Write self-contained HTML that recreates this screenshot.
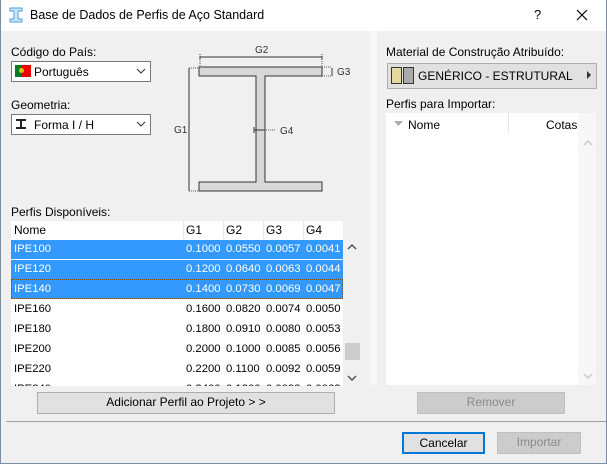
<!DOCTYPE html>
<html><head><meta charset="utf-8"><style>
*{box-sizing:border-box;margin:0;padding:0}
body{width:607px;height:464px;overflow:hidden;font-family:"Liberation Sans",sans-serif;font-size:12px;color:#000;background:#f0f0f0;position:relative}
.a{position:absolute}
.win{left:0;top:0;width:607px;height:464px;border:1px solid #7a8ea6;border-top:none}
.title{left:1px;top:0;width:605px;height:31px;background:#fff}
.dd{background:#fff;border:1px solid #7a7a7a;height:21px}
.btn{background:#e1e1e1;border:1px solid #adadad;text-align:center;line-height:19px}
.dis{color:#8a8a8a;background:#cccccc;border-color:#bfbfbf}
.row{left:11px;width:332px;height:19px;line-height:19px;background:#fff;font-size:11.3px}
.row span{position:absolute;top:0}
.sel{background:#3399ff;color:#fff}
</style></head><body>
<div class="a win"></div>
<div class="a title"></div>
<svg class="a" style="left:9px;top:7px" width="14" height="16" viewBox="0 0 14 16"><path d="M1 1h12v3h-4v8h4v3H1v-3h4V4H1z" fill="#cfe6f7" stroke="#4aa0dc" stroke-width="1"/></svg>
<div class="a" style="left:30px;top:8px;font-size:12.5px">Base de Dados de Perfis de Aço Standard</div>
<div class="a" style="left:534px;top:7px;font-size:13px">?</div>
<svg class="a" style="left:576px;top:9px" width="12" height="12"><path d="M1 1L11 11M11 1L1 11" stroke="#000" stroke-width="1.2"/></svg>

<div class="a" style="left:11px;top:45px">Código do País:</div>
<div class="a dd" style="left:11px;top:61px;width:140px"></div>
<div class="a" style="left:15px;top:65px;width:16px;height:12px;background:#e00"><div style="width:6px;height:12px;background:#0a7a2a"></div><div class="a" style="left:4px;top:3px;width:5px;height:5px;border-radius:50%;background:#e8c000"></div></div>
<div class="a" style="left:34px;top:65px">Português</div>
<svg class="a" style="left:136px;top:68px" width="10" height="6"><path d="M1 1l4 4 4-4" fill="none" stroke="#333"/></svg>

<div class="a" style="left:11px;top:98px">Geometria:</div>
<div class="a dd" style="left:11px;top:114px;width:140px"></div>
<svg class="a" style="left:16px;top:119px" width="10" height="10"><path d="M0 0h10v2H6v6h4v2H0V8h4V2H0z" fill="#222"/></svg>
<div class="a" style="left:34px;top:118px">Forma I / H</div>
<svg class="a" style="left:136px;top:121px" width="10" height="6"><path d="M1 1l4 4 4-4" fill="none" stroke="#333"/></svg>

<svg class="a" style="left:170px;top:40px" width="190" height="160" font-family="Liberation Sans" font-size="10" fill="#333">
<path d="M29 27h123v9H95v106h57v9H29v-9h57V36H29z" fill="#d8d8d8" stroke="#333"/>
<path d="M30 17h122" stroke="#333"/><path d="M30 14v6M152 14v6" stroke="#333" stroke-dasharray="1,1"/>
<path d="M30 17v10M152 17v10" stroke="#555" stroke-dasharray="1,1"/>
<text x="85" y="13">G2</text>
<path d="M19 28v123" stroke="#333"/><path d="M19 28h10M19 151h10" stroke="#555" stroke-dasharray="1,1"/>
<text x="4" y="93">G1</text>
<path d="M152 27h10M152 36h10" stroke="#555" stroke-dasharray="1,1"/>
<path d="M162 28v8" stroke="#333"/><text x="167" y="35">G3</text>
<path d="M84 90h11" stroke="#333"/><path d="M84 87v6M95 87v6" stroke="#333"/>
<path d="M96 90h10" stroke="#555" stroke-dasharray="1,1"/><text x="110" y="94">G4</text>
</svg>

<div class="a" style="left:11px;top:205px">Perfis Disponíveis:</div>
<div class="a" style="left:11px;top:221px;width:332px;height:165px;background:#fff;overflow:hidden">
</div>
<div class="a row" style="top:221px;height:18px;line-height:18px;font-size:12px"><span style="left:3px">Nome</span><span style="left:175px">G1</span><span style="left:215px">G2</span><span style="left:255px">G3</span><span style="left:295px">G4</span>
<div class="a" style="left:172px;top:0;width:1px;height:18px;background:#e5e5e5"></div><div class="a" style="left:212px;top:0;width:1px;height:18px;background:#e5e5e5"></div><div class="a" style="left:252px;top:0;width:1px;height:18px;background:#e5e5e5"></div><div class="a" style="left:292px;top:0;width:1px;height:18px;background:#e5e5e5"></div></div>
<div class="a row sel" style="top:240px"><span style="left:3px">IPE100</span><span style="left:175px">0.1000</span><span style="left:215px">0.0550</span><span style="left:255px">0.0057</span><span style="left:295px">0.0041</span></div>
<div class="a row sel" style="top:260px"><span style="left:3px">IPE120</span><span style="left:175px">0.1200</span><span style="left:215px">0.0640</span><span style="left:255px">0.0063</span><span style="left:295px">0.0044</span></div>
<div class="a row sel" style="top:279px;height:20px;border:1px dotted #7a4a20"><span style="left:2px">IPE140</span><span style="left:174px">0.1400</span><span style="left:214px">0.0730</span><span style="left:254px">0.0069</span><span style="left:294px">0.0047</span></div>
<div class="a row" style="top:300px"><span style="left:3px">IPE160</span><span style="left:175px">0.1600</span><span style="left:215px">0.0820</span><span style="left:255px">0.0074</span><span style="left:295px">0.0050</span></div>
<div class="a row" style="top:320px"><span style="left:3px">IPE180</span><span style="left:175px">0.1800</span><span style="left:215px">0.0910</span><span style="left:255px">0.0080</span><span style="left:295px">0.0053</span></div>
<div class="a row" style="top:340px"><span style="left:3px">IPE200</span><span style="left:175px">0.2000</span><span style="left:215px">0.1000</span><span style="left:255px">0.0085</span><span style="left:295px">0.0056</span></div>
<div class="a row" style="top:360px"><span style="left:3px">IPE220</span><span style="left:175px">0.2200</span><span style="left:215px">0.1100</span><span style="left:255px">0.0092</span><span style="left:295px">0.0059</span></div>
<div class="a row" style="top:380px;height:6px;overflow:hidden"><span style="left:3px">IPE240</span><span style="left:175px">0.2400</span><span style="left:215px">0.1200</span><span style="left:255px">0.0098</span><span style="left:295px">0.0062</span></div>
<svg class="a" style="left:347px;top:244px" width="10" height="6"><path d="M1 5l4-4 4 4" fill="none" stroke="#555" stroke-width="1.5"/></svg>
<div class="a" style="left:345px;top:343px;width:15px;height:17px;background:#cdcdcd"></div>
<svg class="a" style="left:347px;top:375px" width="10" height="6"><path d="M1 1l4 4 4-4" fill="none" stroke="#555" stroke-width="1.5"/></svg>
<div class="a btn" style="left:37px;top:392px;width:298px;height:22px">Adicionar Perfil ao Projeto &gt; &gt;</div>

<div class="a" style="left:370px;top:31px;width:7px;height:354px;background:#f7f7f7"></div>

<div class="a" style="left:386px;top:45px">Material de Construção Atribuído:</div>
<div class="a btn" style="left:387px;top:63px;width:210px;height:26px"></div>
<div class="a" style="left:391px;top:67px;width:11px;height:17px;border:1px solid #333;background:#e6d9a0"></div>
<div class="a" style="left:403px;top:67px;width:11px;height:17px;border:1px solid #333;background:#aaa"></div>
<div class="a" style="left:418px;top:69px">GENÉRICO - ESTRUTURAL</div>
<svg class="a" style="left:587px;top:71px" width="5" height="8"><path d="M0 0l4 4-4 4z" fill="#333"/></svg>
<div class="a" style="left:386px;top:97px">Perfis para Importar:</div>
<div class="a" style="left:386px;top:113px;width:210px;height:272px;background:#f7f7f7"></div>
<div class="a" style="left:386px;top:113px;width:192px;height:272px;background:#fff"></div>
<svg class="a" style="left:394px;top:121px" width="9" height="5"><path d="M0 0h9l-4.5 5z" fill="#aaa"/></svg>
<div class="a" style="left:408px;top:118px">Nome</div>
<div class="a" style="left:508px;top:113px;width:1px;height:20px;background:#e5e5e5"></div>
<div class="a" style="left:546px;top:118px">Cotas</div>
<svg class="a" style="left:583px;top:140px" width="10" height="6"><path d="M1 5l4-4 4 4" fill="none" stroke="#ccc" stroke-width="1.5"/></svg>
<svg class="a" style="left:583px;top:373px" width="10" height="6"><path d="M1 1l4 4 4-4" fill="none" stroke="#ccc" stroke-width="1.5"/></svg>
<div class="a btn dis" style="left:417px;top:392px;width:148px;height:22px">Remover</div>

<div class="a" style="left:6px;top:421px;width:600px;height:1px;background:#a0a0a0"></div>
<div class="a btn" style="left:402px;top:432px;width:83px;height:22px;border:2px solid #0078d7;line-height:18px">Cancelar</div>
<div class="a btn dis" style="left:497px;top:432px;width:84px;height:22px">Importar</div>
</body></html>
